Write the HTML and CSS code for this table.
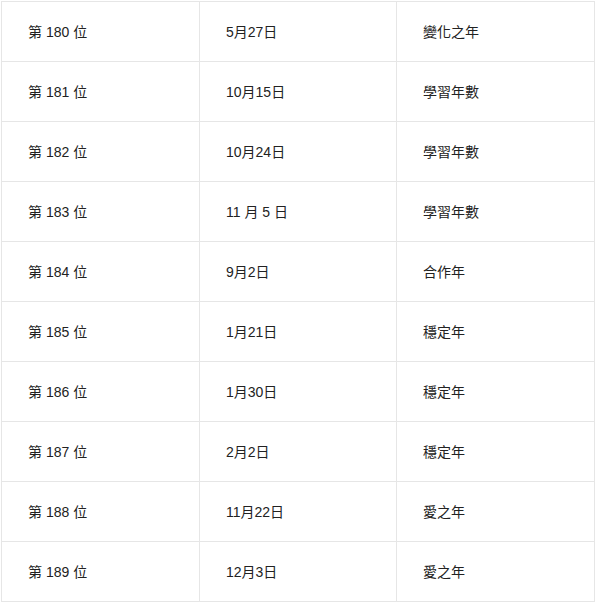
FILE: index.html
```
<!DOCTYPE html>
<html lang="zh-Hant">
<head>
<meta charset="utf-8">
<link rel="stylesheet" href="styles.css">
</head>
<body>
<table class="rank-table">
  <colgroup><col class="c1"><col class="c2"><col class="c3"></colgroup>
  <tbody>
    <tr><td>第 180 位</td><td>5月27日</td><td>變化之年</td></tr>
    <tr><td>第 181 位</td><td>10月15日</td><td>學習年數</td></tr>
    <tr><td>第 182 位</td><td>10月24日</td><td>學習年數</td></tr>
    <tr><td>第 183 位</td><td>11 月 5 日</td><td>學習年數</td></tr>
    <tr><td>第 184 位</td><td>9月2日</td><td>合作年</td></tr>
    <tr><td>第 185 位</td><td>1月21日</td><td>穩定年</td></tr>
    <tr><td>第 186 位</td><td>1月30日</td><td>穩定年</td></tr>
    <tr><td>第 187 位</td><td>2月2日</td><td>穩定年</td></tr>
    <tr><td>第 188 位</td><td>11月22日</td><td>愛之年</td></tr>
    <tr><td>第 189 位</td><td>12月3日</td><td>愛之年</td></tr>
  </tbody>
</table>
</body>
</html>
```
FILE: styles.css
```
html, body {
  margin: 0;
  padding: 0;
  background: #fff;
}
body {
  padding: 1px 0 0 1px;
  font-family: "Liberation Sans", "Noto Sans CJK TC", sans-serif;
  font-size: 14px;
  color: #222;
}
.rank-table {
  border-collapse: collapse;
  table-layout: fixed;
  width: 594px;
}
.c1 { width: 198px; }
.c2 { width: 197px; }
.c3 { width: 198px; }
.rank-table td {
  border: 1px solid #e6e6e6;
  height: 59px;
  padding: 0 0 0 26px;
  box-sizing: border-box;
  vertical-align: middle;
  line-height: 20px;
}
.rank-table td {
  height: 60px;
}
```
